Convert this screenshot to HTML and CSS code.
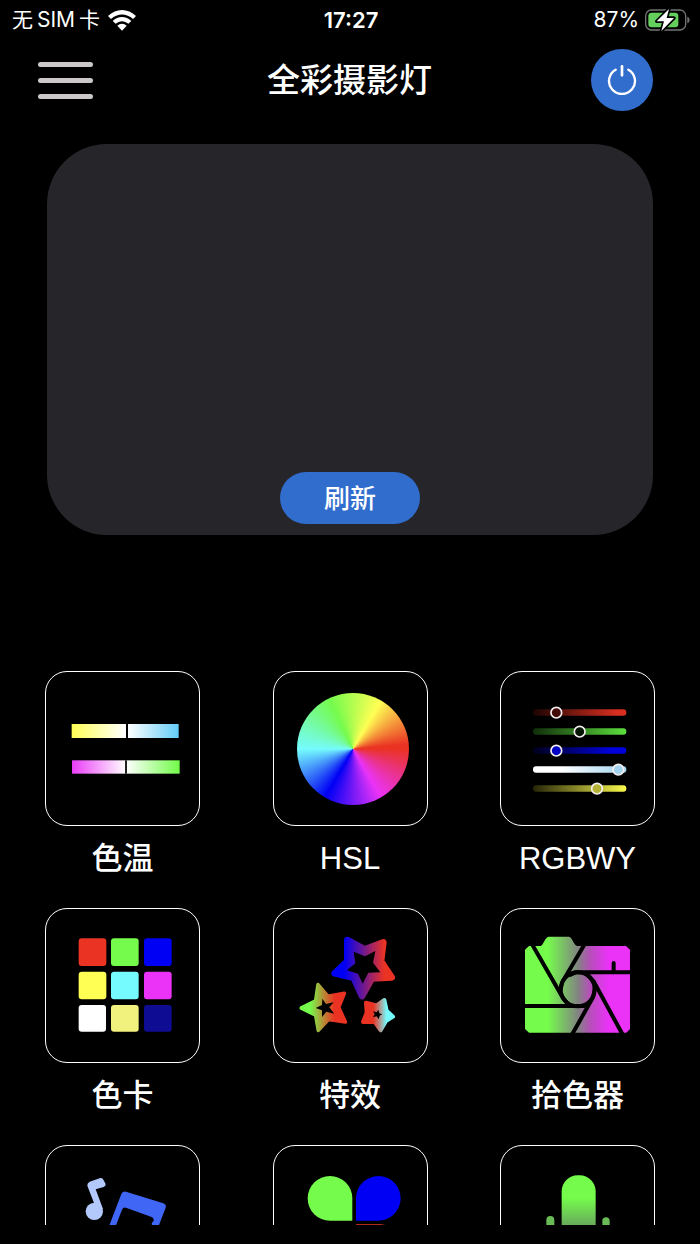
FILE: index.html
```html
<!DOCTYPE html>
<html lang="zh-CN">
<head>
<meta charset="utf-8">
<meta name="viewport" content="width=device-width, initial-scale=1">
<title>全彩摄影灯</title>
<link rel="stylesheet" href="styles.css">
</head>
<body>
<div class="status">
  <div class="status-left">
    <span class="carrier"><span>无</span><span>SIM</span><span>卡</span></span>
    <svg class="wifi" viewBox="0 0 84 63" aria-hidden="true">
      <path fill="#fff" d="M0 18C24-6 60-6 84 18L75 27C56 9 28 9 9 27Z"/>
      <path fill="#fff" d="M14 33C30 17 54 17 70 33L61 41C49 31 35 31 23 41Z"/>
      <path fill="#fff" d="M28 47C36 39 48 39 56 47L42 62Z"/>
    </svg>
  </div>
  <div class="status-time">17:27</div>
  <div class="status-right">
    <span>87%</span>
    <svg class="battery" viewBox="0 0 135 66" aria-hidden="true">
      <rect x="2" y="3" width="120" height="60" rx="17" fill="none" stroke="#737373" stroke-width="4"/>
      <path d="M127 23C136 26 136 40 127 43Z" fill="#737373"/>
      <rect x="10" y="11" width="90" height="44" rx="10" fill="#65cf5e"/>
      <path d="M72 0L35 37H57L49 66L87 27H65Z" fill="#fff" stroke="#000" stroke-width="10" stroke-linejoin="round" paint-order="stroke"/>
    </svg>
  </div>
</div>

<header class="header">
  <button class="menu" type="button" aria-label="菜单"><i></i><i></i><i></i></button>
  <h1 class="title">全彩摄影灯</h1>
  <button class="power" type="button" aria-label="电源">
    <svg viewBox="0 0 90 90" fill="none" stroke="#fff" stroke-width="7" stroke-linecap="round" aria-hidden="true">
      <path d="M26 14A39 39 0 1 0 64 14"/><path d="M45 4V31" stroke-width="8"/>
    </svg>
  </button>
</header>

<section class="devices">
  <button class="refresh" type="button">刷新</button>
</section>

<main class="modes">
  <button class="mode" type="button">
    <span class="tile">
      <svg viewBox="18 36 459 459" aria-hidden="true">
        <defs>
          <linearGradient id="warm"><stop stop-color="#ffff54"/><stop offset=".5" stop-color="#fff"/><stop offset=".56" stop-color="#f3fbff"/><stop offset="1" stop-color="#62cdf8"/></linearGradient>
          <linearGradient id="tint"><stop stop-color="#ea3df7"/><stop offset=".5" stop-color="#fff"/><stop offset="1" stop-color="#72fb49"/></linearGradient>
        </defs>
        <rect x="95" y="192" width="321" height="42" fill="url(#warm)"/>
        <path d="M261 192V234" stroke="#000" stroke-width="6"/>
        <rect x="96" y="301" width="323" height="40" fill="url(#tint)"/>
        <path d="M258 301V341" stroke="#222" stroke-width="6"/>
      </svg>
    </span>
    <span class="label">色温</span>
  </button>

  <button class="mode" type="button">
    <span class="tile"><span class="wheel"></span></span>
    <span class="label">HSL</span>
  </button>

  <button class="mode" type="button">
    <span class="tile">
      <svg viewBox="24 36 459 459" aria-hidden="true">
        <defs>
          <linearGradient id="sr"><stop stop-color="#1c0402"/><stop offset=".9" stop-color="#d82e20"/></linearGradient>
          <linearGradient id="sg"><stop stop-color="#102d0b"/><stop offset="1" stop-color="#5de03d"/></linearGradient>
          <linearGradient id="sb"><stop stop-color="#00001c"/><stop offset=".85" stop-color="#0000dc"/></linearGradient>
          <linearGradient id="sw"><stop offset=".3" stop-color="#fff"/><stop offset="1" stop-color="#a2d4ef"/></linearGradient>
          <linearGradient id="sy"><stop stop-color="#252508"/><stop offset="1" stop-color="#fafa4e"/></linearGradient>
        </defs>
        <rect x="120" y="148" width="280" height="19" rx="9" fill="url(#sr)"/>
        <rect x="120" y="205" width="280" height="19" rx="9" fill="url(#sg)"/>
        <rect x="120" y="262" width="280" height="19" rx="9" fill="url(#sb)"/>
        <rect x="120" y="319" width="280" height="19" rx="9" fill="url(#sw)"/>
        <rect x="120" y="376" width="280" height="19" rx="9" fill="url(#sy)"/>
        <g stroke="#f4eeee" stroke-width="5">
          <circle cx="190" cy="158" r="16" fill="#420b08"/>
          <circle cx="260" cy="215" r="16" fill="#061404"/>
          <circle cx="190" cy="272" r="16" fill="#0000c4"/>
          <circle cx="376" cy="329" r="16" fill="#a2d4ef"/>
          <circle cx="312" cy="386" r="16" fill="#b5b337"/>
        </g>
      </svg>
    </span>
    <span class="label">RGBWY</span>
  </button>

  <button class="mode" type="button">
    <span class="tile">
      <svg viewBox="18 27 459 459" aria-hidden="true">
        <rect x="116" y="115" width="83" height="83" rx="9" fill="#ea3323"/>
        <rect x="213" y="115" width="83" height="83" rx="9" fill="#75fb4c"/>
        <rect x="312" y="115" width="83" height="83" rx="9" fill="#0000f5"/>
        <rect x="116" y="215" width="83" height="83" rx="9" fill="#ffff54"/>
        <rect x="213" y="215" width="83" height="83" rx="9" fill="#75fbfd"/>
        <rect x="312" y="215" width="83" height="83" rx="9" fill="#ea33f7"/>
        <rect x="116" y="315" width="82" height="80" rx="9" fill="#fff"/>
        <rect x="213" y="315" width="83" height="80" rx="9" fill="#f1f17e"/>
        <rect x="312" y="315" width="83" height="80" rx="9" fill="#0f0c94"/>
      </svg>
    </span>
    <span class="label">色卡</span>
  </button>

  <button class="mode" type="button">
    <span class="tile">
      <svg viewBox="24 27 459 459" aria-hidden="true">
        <defs>
          <linearGradient id="s1" gradientUnits="userSpaceOnUse" x1="235" x2="355"><stop stop-color="#0000f5"/><stop offset="1" stop-color="#ea3323"/></linearGradient>
          <linearGradient id="s2" gradientUnits="userSpaceOnUse" x1="132" x2="205"><stop stop-color="#75fb4c"/><stop offset="1" stop-color="#ea3323"/></linearGradient>
          <linearGradient id="s3" gradientUnits="userSpaceOnUse" x1="322" x2="362"><stop stop-color="#ea3323"/><stop offset="1" stop-color="#75fbfd"/></linearGradient>
        </defs>
        <g stroke-linejoin="round">
          <path d="M244 120L296 148L352 127L345 184L377 232L318 235L288 288L263 233L206 220L244 184Z" fill="url(#s1)" stroke="url(#s1)" stroke-width="20"/>
          <path d="M156 254L186 289L235 280L218 322L238 366L188 358L157 391L149 345L106 324L149 303Z" fill="url(#s2)" stroke="url(#s2)" stroke-width="11"/>
          <path d="M355 300L362 332L381 350L360 363L344 391L325 365L291 366L302 338L300 308L332 316Z" fill="url(#s3)" stroke="url(#s3)" stroke-width="12"/>
        </g>
        <path d="M263 155L297 169L328 153L321 188L343 217L307 218L290 251L276 221L243 211L268 190ZM169 296L180 312L203 307L190 322L205 341L181 335L168 351L168 331L149 324L168 315ZM337 329L340 340L349 343L341 347L338 358L332 349L321 352L326 342L321 334L332 337Z" fill="#000"/>
      </svg>
    </span>
    <span class="label">特效</span>
  </button>

  <button class="mode" type="button">
    <span class="tile">
      <svg viewBox="24 27 459 459" aria-hidden="true">
        <defs><linearGradient id="cam" gradientUnits="userSpaceOnUse" x1="165" x2="345"><stop stop-color="#75fb4c"/><stop offset=".5" stop-color="#818481"/><stop offset=".7" stop-color="#b64fb9"/><stop offset="1" stop-color="#ea33f7"/></linearGradient></defs>
        <path d="M108 138H143C150 137 157 110 167 110H228C238 112 241 133 252 138H399L411 149V387L400 398H108L96 387V149Z" fill="url(#cam)"/>
        <g fill="none" stroke="#000" stroke-width="12">
          <circle cx="254" cy="268" r="51"/>
          <path d="M118 134L210 294L228 316M274 134L208 246L202 272M92 318H276M415 217H248L228 226M238 402L300 292L306 264M388 402L302 244L284 224"/>
          <path d="M362 217V189" stroke-linecap="round"/>
        </g>
      </svg>
    </span>
    <span class="label">拾色器</span>
  </button>

  <button class="mode" type="button" aria-label="音乐">
    <span class="tile">
      <svg viewBox="18 33 459 459" aria-hidden="true">
        <g fill="#b3c8fb">
          <circle cx="163" cy="229" r="26"/>
          <path d="M142 152Q141 144 149 140L181 129Q188 128 190 134L197 147Q198 153 191 156L167 163L189 222L170 232L162 204Z"/>
        </g>
        <path d="M200 292L244 177Q248 167 258 170L370 205Q380 209 377 218L344 304H318L337 272Q332 264 341 258Q343 248 333 245L260 219Q250 215 246 224L220 292Z" fill="#4066f5"/>
      </svg>
    </span>
  </button>

  <button class="mode" type="button" aria-label="花瓣">
    <span class="tile">
      <svg viewBox="24 33 459 459" aria-hidden="true">
        <path d="M259 257H192A67 67 0 1 1 259 190Z" fill="#75fb4c"/>
        <path d="M270 257H335A67 67 0 1 0 270 190Z" fill="#0000f5"/>
        <path d="M270 267H345A67 67 0 1 1 270 334Z" fill="#b4271b"/>
      </svg>
    </span>
  </button>

  <button class="mode" type="button" aria-label="麦克风">
    <span class="tile">
      <svg viewBox="24 33 459 459" aria-hidden="true">
        <defs><linearGradient id="mic" gradientUnits="userSpaceOnUse" x1="0" y1="190" x2="0" y2="290"><stop stop-color="#75fb4c"/><stop offset="1" stop-color="#65965f"/></linearGradient></defs>
        <rect x="206" y="121" width="102" height="200" rx="48" fill="url(#mic)"/>
        <path d="M160 300V255A12 12 0 0 1 184 255V300ZM328 300V258A11 11 0 0 1 350 258V300Z" fill="#69bb56"/>
      </svg>
    </span>
  </button>
</main>
</body>
</html>
```
FILE: styles.css
```css
* {
  box-sizing: border-box;
}

body {
  display: flex;
  flex-direction: column;
  height: 100vh;
  margin: 0;
  padding-bottom: 19px;
  background: #000;
  color: #fff;
  font-family: Inter, "Noto Sans CJK SC", sans-serif;
}

button {
  border: 0;
  padding: 0;
  background: none;
  color: inherit;
  font: inherit;
  cursor: pointer;
}

svg {
  display: block;
}

.status {
  display: grid;
  grid-template-columns: 1fr auto 1fr;
  align-items: center;
  height: 40px;
  padding: 0 10px 0 12px;
  font-size: 21px;
  line-height: 24px;
}

.status-left,
.status-right {
  display: flex;
  align-items: center;
  gap: 8px;
}

.carrier {
  display: flex;
  gap: 4px;
}

.status-right {
  justify-content: flex-end;
  gap: 6px;
}

.status-time {
  font-size: 22px;
  font-weight: 600;
}

.wifi {
  width: 28px;
  height: 21px;
}

.battery {
  width: 45px;
  height: 22px;
}

.header {
  display: grid;
  grid-template-columns: 1fr auto 1fr;
  align-items: center;
  height: 80px;
  padding: 0 47px 0 38px;
}

.menu {
  display: flex;
  flex-direction: column;
  gap: 11px;
  width: 55px;
}

.menu i {
  height: 5px;
  border-radius: 3px;
  background: #ccc8ca;
}

.title {
  margin: 0;
  padding-left: 8px;
  font-size: 33px;
  font-weight: 500;
  line-height: 40px;
}

.power {
  display: grid;
  place-items: center;
  justify-self: end;
  width: 62px;
  height: 62px;
  border-radius: 50%;
  background: #306dcd;
}

.power svg {
  width: 30px;
  height: 30px;
}

.devices {
  display: flex;
  flex: none;
  align-items: flex-end;
  justify-content: center;
  min-height: 391px;
  margin: 24px 47px 0;
  padding-bottom: 11px;
  border-radius: 60px;
  background: #262529;
}

.refresh {
  width: 140px;
  height: 52px;
  padding-bottom: 3px;
  border-radius: 26px;
  background: #306dcd;
  font-size: 26px;
  font-weight: 500;
}

.modes {
  display: grid;
  flex: 1;
  grid-template-columns: repeat(3, auto);
  grid-auto-rows: 207px;
  align-content: start;
  justify-content: space-between;
  row-gap: 30px;
  min-height: 0;
  margin-top: 136px;
  padding: 0 45px;
  overflow: hidden;
}

.mode {
  display: flex;
  flex-direction: column;
  align-items: center;
  justify-content: flex-start;
  gap: 13px;
  width: 155px;
}

.tile {
  display: block;
  flex: none;
  width: 155px;
  height: 155px;
  border: 1px solid #fff;
  border-radius: 22px;
  overflow: hidden;
}

.wheel {
  display: block;
  width: 112px;
  height: 112px;
  margin: 21px 0 0 23px;
  border-radius: 50%;
  background: conic-gradient(from 90deg, #ea3323, #ea33f7 60deg, #0000f5 120deg, #75fbfd 180deg, #75fb4c 245deg, #ffff54 300deg, #ea3323 355deg);
}

.label {
  font-family: "Liberation Sans", "Noto Sans CJK SC", sans-serif;
  font-size: 31px;
  font-weight: 500;
  line-height: 40px;
  white-space: nowrap;
}
```
